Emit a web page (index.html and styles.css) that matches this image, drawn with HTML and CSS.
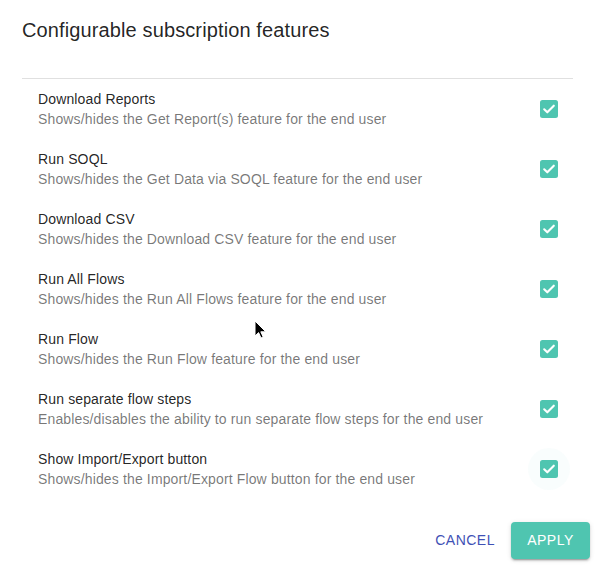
FILE: index.html
```html
<!DOCTYPE html>
<html>
<head>
<meta charset="utf-8">
<link rel="stylesheet" href="styles.css">
</head>
<body>
<div class="dialog">
  <h2 class="title">Configurable subscription features</h2>
  <div class="content">
    <ul class="list">
      <li class="item">
        <div class="text"><div class="primary">Download Reports</div><div class="secondary">Shows/hides the Get Report(s) feature for the end user</div></div>
        <span class="check"><svg viewBox="0 0 18 18" width="18" height="18"><rect width="18" height="18" rx="2.5" fill="#4fc5b0"/><path d="M4.2 9.3l3.1 3 6.5-6.6" fill="none" stroke="#fff" stroke-width="2.1" stroke-linecap="round" stroke-linejoin="round"/></svg></span>
      </li>
      <li class="item">
        <div class="text"><div class="primary">Run SOQL</div><div class="secondary">Shows/hides the Get Data via SOQL feature for the end user</div></div>
        <span class="check"><svg viewBox="0 0 18 18" width="18" height="18"><rect width="18" height="18" rx="2.5" fill="#4fc5b0"/><path d="M4.2 9.3l3.1 3 6.5-6.6" fill="none" stroke="#fff" stroke-width="2.1" stroke-linecap="round" stroke-linejoin="round"/></svg></span>
      </li>
      <li class="item">
        <div class="text"><div class="primary">Download CSV</div><div class="secondary">Shows/hides the Download CSV feature for the end user</div></div>
        <span class="check"><svg viewBox="0 0 18 18" width="18" height="18"><rect width="18" height="18" rx="2.5" fill="#4fc5b0"/><path d="M4.2 9.3l3.1 3 6.5-6.6" fill="none" stroke="#fff" stroke-width="2.1" stroke-linecap="round" stroke-linejoin="round"/></svg></span>
      </li>
      <li class="item">
        <div class="text"><div class="primary">Run All Flows</div><div class="secondary">Shows/hides the Run All Flows feature for the end user</div></div>
        <span class="check"><svg viewBox="0 0 18 18" width="18" height="18"><rect width="18" height="18" rx="2.5" fill="#4fc5b0"/><path d="M4.2 9.3l3.1 3 6.5-6.6" fill="none" stroke="#fff" stroke-width="2.1" stroke-linecap="round" stroke-linejoin="round"/></svg></span>
      </li>
      <li class="item">
        <div class="text"><div class="primary">Run Flow</div><div class="secondary">Shows/hides the Run Flow feature for the end user</div></div>
        <span class="check"><svg viewBox="0 0 18 18" width="18" height="18"><rect width="18" height="18" rx="2.5" fill="#4fc5b0"/><path d="M4.2 9.3l3.1 3 6.5-6.6" fill="none" stroke="#fff" stroke-width="2.1" stroke-linecap="round" stroke-linejoin="round"/></svg></span>
      </li>
      <li class="item">
        <div class="text"><div class="primary">Run separate flow steps</div><div class="secondary">Enables/disables the ability to run separate flow steps for the end user</div></div>
        <span class="check"><svg viewBox="0 0 18 18" width="18" height="18"><rect width="18" height="18" rx="2.5" fill="#4fc5b0"/><path d="M4.2 9.3l3.1 3 6.5-6.6" fill="none" stroke="#fff" stroke-width="2.1" stroke-linecap="round" stroke-linejoin="round"/></svg></span>
      </li>
      <li class="item">
        <div class="text"><div class="primary">Show Import/Export button</div><div class="secondary">Shows/hides the Import/Export Flow button for the end user</div></div>
        <span class="check hover"><svg viewBox="0 0 18 18" width="18" height="18"><rect width="18" height="18" rx="2.5" fill="#4fc5b0"/><path d="M4.2 9.3l3.1 3 6.5-6.6" fill="none" stroke="#fff" stroke-width="2.1" stroke-linecap="round" stroke-linejoin="round"/></svg></span>
      </li>
    </ul>
  </div>
  <div class="actions">
    <button class="btn cancel">Cancel</button>
    <button class="btn apply">Apply</button>
  </div>
</div>
<svg class="cursor" width="14" height="20" viewBox="0 0 14 20"><path d="M1 1v15l3.6-3.4 2.4 5.4 2.2-1-2.4-5.2h5z" fill="#000" stroke="#fff" stroke-width="1"/></svg>
</body>
</html>
```
FILE: styles.css
```css
html, body {
  margin: 0;
  padding: 0;
  background: #fff;
}
body {
  font-family: "Liberation Sans", Arial, sans-serif;
  color: rgba(0,0,0,0.87);
}
.dialog {
  width: 597px;
  height: 567px;
  display: flex;
  flex-direction: column;
}
.title {
  margin: 0;
  padding: 14px 22px 0;
  font-size: 20px;
  font-weight: 400;
  line-height: 32px;
  height: 32px;
  letter-spacing: 0.12px;
}
.content {
  padding: 0 24px 0 22px;
  margin-top: 32px;
}
.list {
  list-style: none;
  margin: 0;
  padding: 0;
  border-top: 1px solid #e0e0e0;
}
.item {
  height: 60px;
  box-sizing: border-box;
  padding: 10px 0 10px 16px;
  display: flex;
  align-items: center;
  justify-content: space-between;
}
.primary, .secondary {
  font-size: 14px;
  line-height: 20px;
  letter-spacing: 0.14px;
}
.primary {
  color: rgba(0,0,0,0.87);
}
.secondary {
  color: rgba(0,0,0,0.54);
}
.check {
  width: 42px;
  height: 42px;
  display: flex;
  align-items: center;
  justify-content: center;
  border-radius: 50%;
  margin-right: 3px;
}
.check.hover {
  background: rgba(79,197,176,0.03);
}
.actions {
  display: flex;
  justify-content: flex-end;
  align-items: center;
  gap: 8px;
  padding: 23px 7px 0 0;
}
.btn {
  font-family: "Liberation Sans", Arial, sans-serif;
  font-size: 14px;
  font-weight: 400;
  letter-spacing: 0.5px;
  text-transform: uppercase;
  border: none;
  border-radius: 4px;
  height: 37px;
  line-height: 37px;
  padding: 0 16px;
  cursor: pointer;
}
.cancel {
  background: transparent;
  color: #3f51b5;
  padding: 0 8px;
}
.apply {
  background: #4fc5b0;
  color: #fff;
  min-width: 79px;
  box-shadow: 0 3px 1px -2px rgba(0,0,0,0.2), 0 2px 2px 0 rgba(0,0,0,0.14), 0 1px 5px 0 rgba(0,0,0,0.12);
}
.cursor {
  position: absolute;
  left: 254px;
  top: 320px;
}
```
